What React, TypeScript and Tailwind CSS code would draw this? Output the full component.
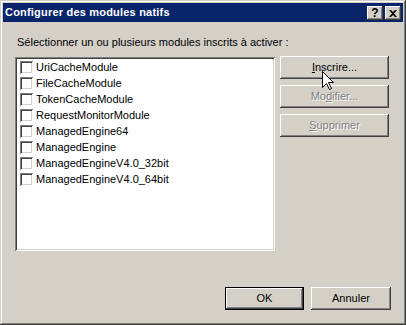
const MODULES = [
  "UriCacheModule",
  "FileCacheModule",
  "TokenCacheModule",
  "RequestMonitorModule",
  "ManagedEngine64",
  "ManagedEngine",
  "ManagedEngineV4.0_32bit",
  "ManagedEngineV4.0_64bit",
]

const raised =
  "shadow-[inset_-1px_-1px_#404040,inset_1px_1px_#ffffff,inset_-2px_-2px_#808080,inset_2px_2px_#d4d0c8]"

function Button({
  children,
  disabled,
  isDefault,
  className,
}: {
  children: React.ReactNode
  disabled?: boolean
  isDefault?: boolean
  className?: string
}) {
  return (
    <div
      className={`flex items-center justify-center h-[23px] bg-[#d4d0c8] ${
        isDefault
          ? "border border-black shadow-[inset_-1px_-1px_#404040,inset_1px_1px_#ffffff,inset_-2px_-2px_#808080]"
          : raised
      } ${disabled ? "text-[#808080] [text-shadow:1px_1px_#ffffff]" : "text-black"} ${className ?? ""}`}
    >
      {children}
    </div>
  )
}

function Checkbox() {
  return (
    <div className="w-[13px] h-[13px] bg-white shadow-[inset_1px_1px_#808080,inset_-1px_-1px_#ffffff,inset_2px_2px_#404040,inset_-2px_-2px_#d4d0c8]" />
  )
}

function TitleButton({ children }: { children: React.ReactNode }) {
  return (
    <div
      className={`flex items-center justify-center w-[16px] h-[14px] bg-[#d4d0c8] text-black font-bold text-[12px] leading-none ${raised}`}
    >
      {children}
    </div>
  )
}

export default function App() {
  return (
    <div
      className="relative w-[406px] h-[325px] bg-[#d4d0c8] p-[3px] flex flex-col text-[11px] text-black shadow-[inset_-1px_-1px_#404040,inset_1px_1px_#d4d0c8,inset_-2px_-2px_#808080,inset_2px_2px_#ffffff]"
      style={{ fontFamily: '"Liberation Sans", Arial, sans-serif' }}
    >
      {/* Title bar */}
      <div className="flex items-center h-[19px] bg-[#0a246a] pl-[2px] pr-[2px]">
        <span className="flex-1 text-white font-bold text-[11px] tracking-[0.2px]">
          Configurer des modules natifs
        </span>
        <div className="flex gap-[2px] pt-[1px]">
          <TitleButton>?</TitleButton>
          <TitleButton>
            <svg width="8" height="7" viewBox="0 0 8 7">
              <path d="M0 0h2l2 2 2-2h2L5 3.5 8 7H6L4 5 2 7H0l3-3.5z" fill="#000" />
            </svg>
          </TitleButton>
        </div>
      </div>

      {/* Body */}
      <div className="flex flex-col flex-1 pl-[12px] pr-[12px]">
        <div className="mt-[14px] h-[13px] leading-[13px] pl-[2px]">
          Sélectionner un ou plusieurs modules inscrits à activer :
        </div>

        <div className="flex mt-[8px]">
          {/* List */}
          <div className="w-[260px] h-[194px] bg-white p-[2px] shadow-[inset_1px_1px_#808080,inset_-1px_-1px_#ffffff,inset_2px_2px_#404040,inset_-2px_-2px_#d4d0c8]">
            <div className="flex flex-col">
              {MODULES.map((m) => (
                <div key={m} className="flex items-center h-[16px] pl-[3px] gap-[3px]">
                  <Checkbox />
                  <span className="leading-[16px]">{m}</span>
                </div>
              ))}
            </div>
          </div>

          {/* Side buttons */}
          <div className="flex flex-col gap-[6px] ml-[5px] -mt-[1px]">
            <Button className="w-[109px]">
              <span>
                <span className="underline">I</span>nscrire...
              </span>
            </Button>
            <Button className="w-[109px]" disabled>
              <span>
                Mo<span className="underline">d</span>ifier...
              </span>
            </Button>
            <Button className="w-[109px]" disabled>
              <span>
                <span className="underline">S</span>upprimer
              </span>
            </Button>
          </div>
        </div>

        <div className="flex justify-end gap-[7px] mt-[36px] pr-[0px]">
          <Button isDefault className="w-[79px]">
            OK
          </Button>
          <Button className="w-[80px]">Annuler</Button>
        </div>
      </div>

      {/* Mouse pointer */}
      <svg
        className="absolute left-[322px] top-[71px]"
        width="13"
        height="20"
        viewBox="0 0 13 20"
      >
        <path
          d="M0.5 0.5 L0.5 16.5 L4.5 12.5 L7.5 18.5 L9.5 17.5 L6.5 11.5 L11.5 11.5 Z"
          fill="#ffffff"
          stroke="#000000"
          strokeWidth="1"
        />
      </svg>
    </div>
  )
}
